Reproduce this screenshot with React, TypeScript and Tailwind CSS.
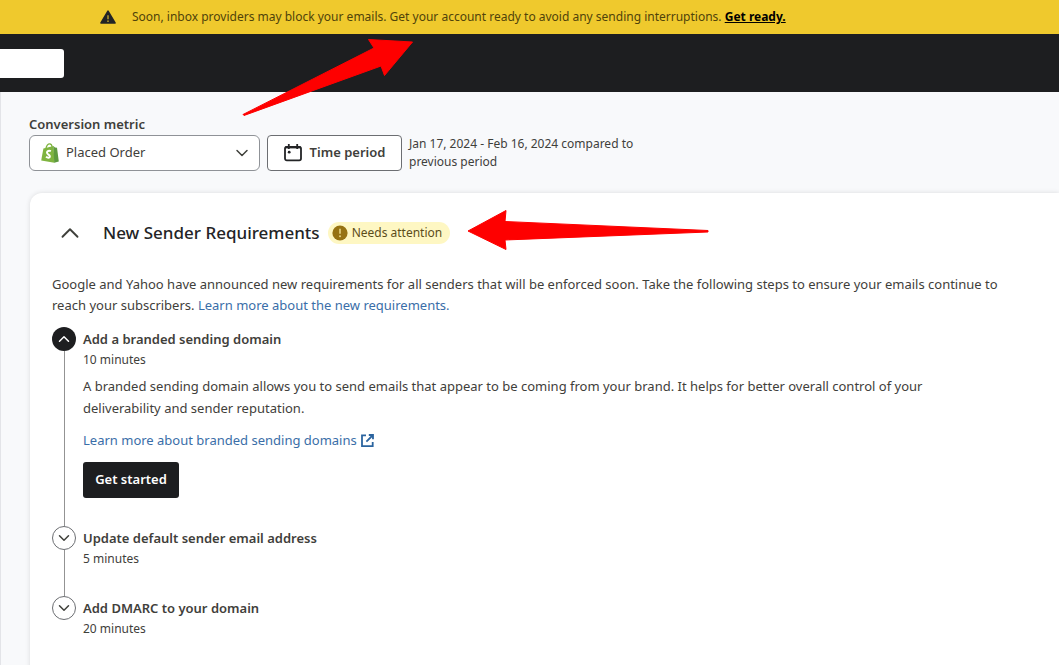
import { ChevronDown, ChevronUp } from "lucide-react";

const laterSteps = [
  { title: "Update default sender email address", time: "5 minutes" },
  { title: "Add DMARC to your domain", time: "20 minutes" },
];

function WarningIcon() {
  return (
    <svg viewBox="0 0 16 15" className="h-[15px] w-4 shrink-0" aria-hidden="true">
      <path d="M8 1.2 15 13H1z" fill="#232426" stroke="#232426" strokeWidth="1.6" strokeLinejoin="round" />
      <path d="M8 5.2v4" stroke="#b3982b" strokeWidth="1.5" />
      <circle cx="8" cy="11.2" r="0.9" fill="#b3982b" />
    </svg>
  );
}

function ShopifyIcon() {
  return (
    <svg viewBox="0 0 18 20" className="h-5 w-[18px]" aria-hidden="true">
      <path d="M2.4 5.4 12.6 3l.8 16.8L.2 17.4z" fill="#7fb440" />
      <path d="M12.4 3 14 4.4l2 .3 1.8 13.8-4.6 1.3z" fill="#5e9a3e" />
      <path d="M5 5.2C5.6 2.6 7 .8 8.6.8c1.6 0 2.4 1.4 2.5 3.2" fill="none" stroke="#7fb440" strokeWidth="1.3" />
      <path
        d="M9.9 8.2C8.1 7.3 5.9 8.1 6 9.8c.1 1.7 2.9 1.8 2.9 3.5 0 1.6-2 1.9-3.9.5"
        fill="none"
        stroke="#fff"
        strokeWidth="2"
      />
    </svg>
  );
}

function CalendarIcon() {
  return (
    <svg viewBox="0 0 18 18" className="h-[18px] w-[18px]" fill="none" stroke="#232426" aria-hidden="true">
      <rect x="1" y="2.8" width="16" height="13.6" rx="1.8" strokeWidth="1.8" />
      <path d="M1 3.4h16" strokeWidth="2" />
      <path d="M4.8 0v5M13.2 0v5" strokeWidth="1.8" />
      <circle cx="5.2" cy="8.2" r="1.4" fill="#232426" stroke="none" />
    </svg>
  );
}

function ExternalIcon() {
  return (
    <svg viewBox="0 0 13 13" className="h-[13px] w-[13px]" fill="none" stroke="#2b649f" strokeWidth="1.8" aria-hidden="true">
      <path d="M5 1.4H1v10.7h10.7V8" />
      <path d="M7.8 1H12v4.2M12 1 5.4 7.6" />
    </svg>
  );
}

function AlertDot() {
  return (
    <svg viewBox="0 0 16 16" className="h-4 w-4" aria-hidden="true">
      <circle cx="8" cy="8" r="7.6" fill="#967212" />
      <path d="M8 3.8v5" stroke="#e5d283" strokeWidth="1.6" />
      <circle cx="8" cy="11.3" r="1" fill="#e5d283" />
    </svg>
  );
}

function Arrows() {
  return (
    <svg className="pointer-events-none absolute left-0 top-0 h-[260px] w-[720px]" viewBox="0 0 720 260" aria-hidden="true">
      <g fill="#fe0000" stroke="#fe0000" strokeLinejoin="round">
        <path d="M243 114.5 374 48l-5.5-8.5L412.5 42 384.5 75.5l-3.5-9.500L244 115.500z" />
        <path d="M468 231 506 210.500l-1 11L708 230.500v1.500l-203 8 1 9.500z" />
      </g>
    </svg>
  );
}

export default function App() {
  return (
    <div className="relative h-screen overflow-hidden bg-[#f8f9fb] font-['Noto_Sans',sans-serif] text-[13px] text-[#3f403b]">
      <div className="flex h-[34px] items-center gap-4 bg-[#efc92d] pl-[100px] text-xs text-[#50430a]">
        <WarningIcon />
        <p>
          Soon, inbox providers may block your emails. Get your account ready to avoid any sending interruptions.{" "}
          <a href="#" className="font-bold text-black underline">Get ready.</a>
        </p>
      </div>

      <header className="flex h-[58px] items-center bg-[#1d1e20]">
        <input aria-label="Search" className="h-[29px] w-16 rounded-r-[3px] bg-white px-2 outline-none" />
      </header>

      <main className="border-l border-[#e3e4e8] pl-7 pt-[22px]">
        <label htmlFor="metric" className="block h-[21px] font-semibold leading-5">Conversion metric</label>
        <div className="flex items-center gap-[7px]">
          <div className="relative">
            <select
              id="metric"
              className="h-9 w-[231px] appearance-none rounded-md border border-[#8f9297] bg-white pl-9 pr-8 outline-none"
            >
              <option>Placed Order</option>
            </select>
            <span className="pointer-events-none absolute inset-y-0 left-3 flex items-center">
              <ShopifyIcon />
            </span>
            <span className="pointer-events-none absolute inset-y-0 right-2 flex items-center">
              <ChevronDown size={20} strokeWidth={1.8} />
            </span>
          </div>
          <button className="flex h-9 w-[135px] items-center justify-center gap-2 rounded border border-[#6c6e72] bg-white font-semibold">
            <CalendarIcon />
            Time period
          </button>
          <p className="w-[240px] text-xs leading-[18px]">Jan 17, 2024 - Feb 16, 2024 compared to previous period</p>
        </div>

        <section className="ml-px mt-[22px] rounded-l-xl bg-white px-[22px] pb-8 pt-6 shadow-[0_0_5px_rgba(0,0,0,0.12)]">
          <div className="flex h-8 items-center">
            <button aria-label="Collapse" className="flex w-9 justify-center">
              <ChevronUp size={30} strokeWidth={1.5} />
            </button>
            <h2 className="ml-[15px] text-[17px] font-medium text-[#232426]">New Sender Requirements</h2>
            <span className="ml-2 flex h-[22px] items-center gap-1 rounded-full bg-[#fef7c3] px-1 pr-2 text-xs text-[#5c4d1a]">
              <AlertDot />
              Needs attention
            </span>
          </div>

          <p className="mt-[25px] pr-5 leading-[21px]">
            Google and Yahoo have announced new requirements for all senders that will be enforced soon. Take the following
            steps to ensure your emails continue to reach your subscribers.{" "}
            <a href="#" className="text-[#3a6ea8]">Learn more about the new requirements.</a>
          </p>

          <ol className="mt-[11px]">
            <li className="flex gap-[7px]">
              <div className="flex w-6 flex-col items-center">
                <button aria-label="Hide step" className="flex h-6 w-6 items-center justify-center rounded-full bg-[#1d1e20] text-white">
                  <ChevronUp size={18} strokeWidth={2} />
                </button>
                <span className="w-px flex-1 bg-[#939393]" />
              </div>
              <div className="flex-1 pb-7">
                <h3 className="font-semibold leading-6">Add a branded sending domain</h3>
                <p className="text-xs leading-[18px]">10 minutes</p>
                <p className="mt-1.5 max-w-[900px] leading-[22px]">
                  A branded sending domain allows you to send emails that appear to be coming from your brand. It helps for
                  better overall control of your deliverability and sender reputation.
                </p>
                <a href="#" className="mt-2.5 flex items-center gap-1 leading-[22px] text-[#3a6ea8]">
                  Learn more about branded sending domains
                  <ExternalIcon />
                </a>
                <button className="mt-[11px] h-9 w-24 rounded-[3px] bg-[#1d1e20] font-semibold text-white">Get started</button>
              </div>
            </li>
            {laterSteps.map((step, i) => (
              <li key={step.title} className="flex gap-[7px]">
                <div className="flex w-6 flex-col items-center">
                  <button aria-label="Show step" className="flex h-6 w-6 items-center justify-center rounded-full border border-[#6c6e72] bg-white">
                    <ChevronDown size={18} strokeWidth={2} />
                  </button>
                  {i < laterSteps.length - 1 && <span className="w-px flex-1 bg-[#939393]" />}
                </div>
                <div className="h-[70px] flex-1">
                  <h3 className="font-semibold leading-6">{step.title}</h3>
                  <p className="text-xs leading-[18px]">{step.time}</p>
                </div>
              </li>
            ))}
          </ol>
        </section>
      </main>

      <Arrows />
    </div>
  );
}
